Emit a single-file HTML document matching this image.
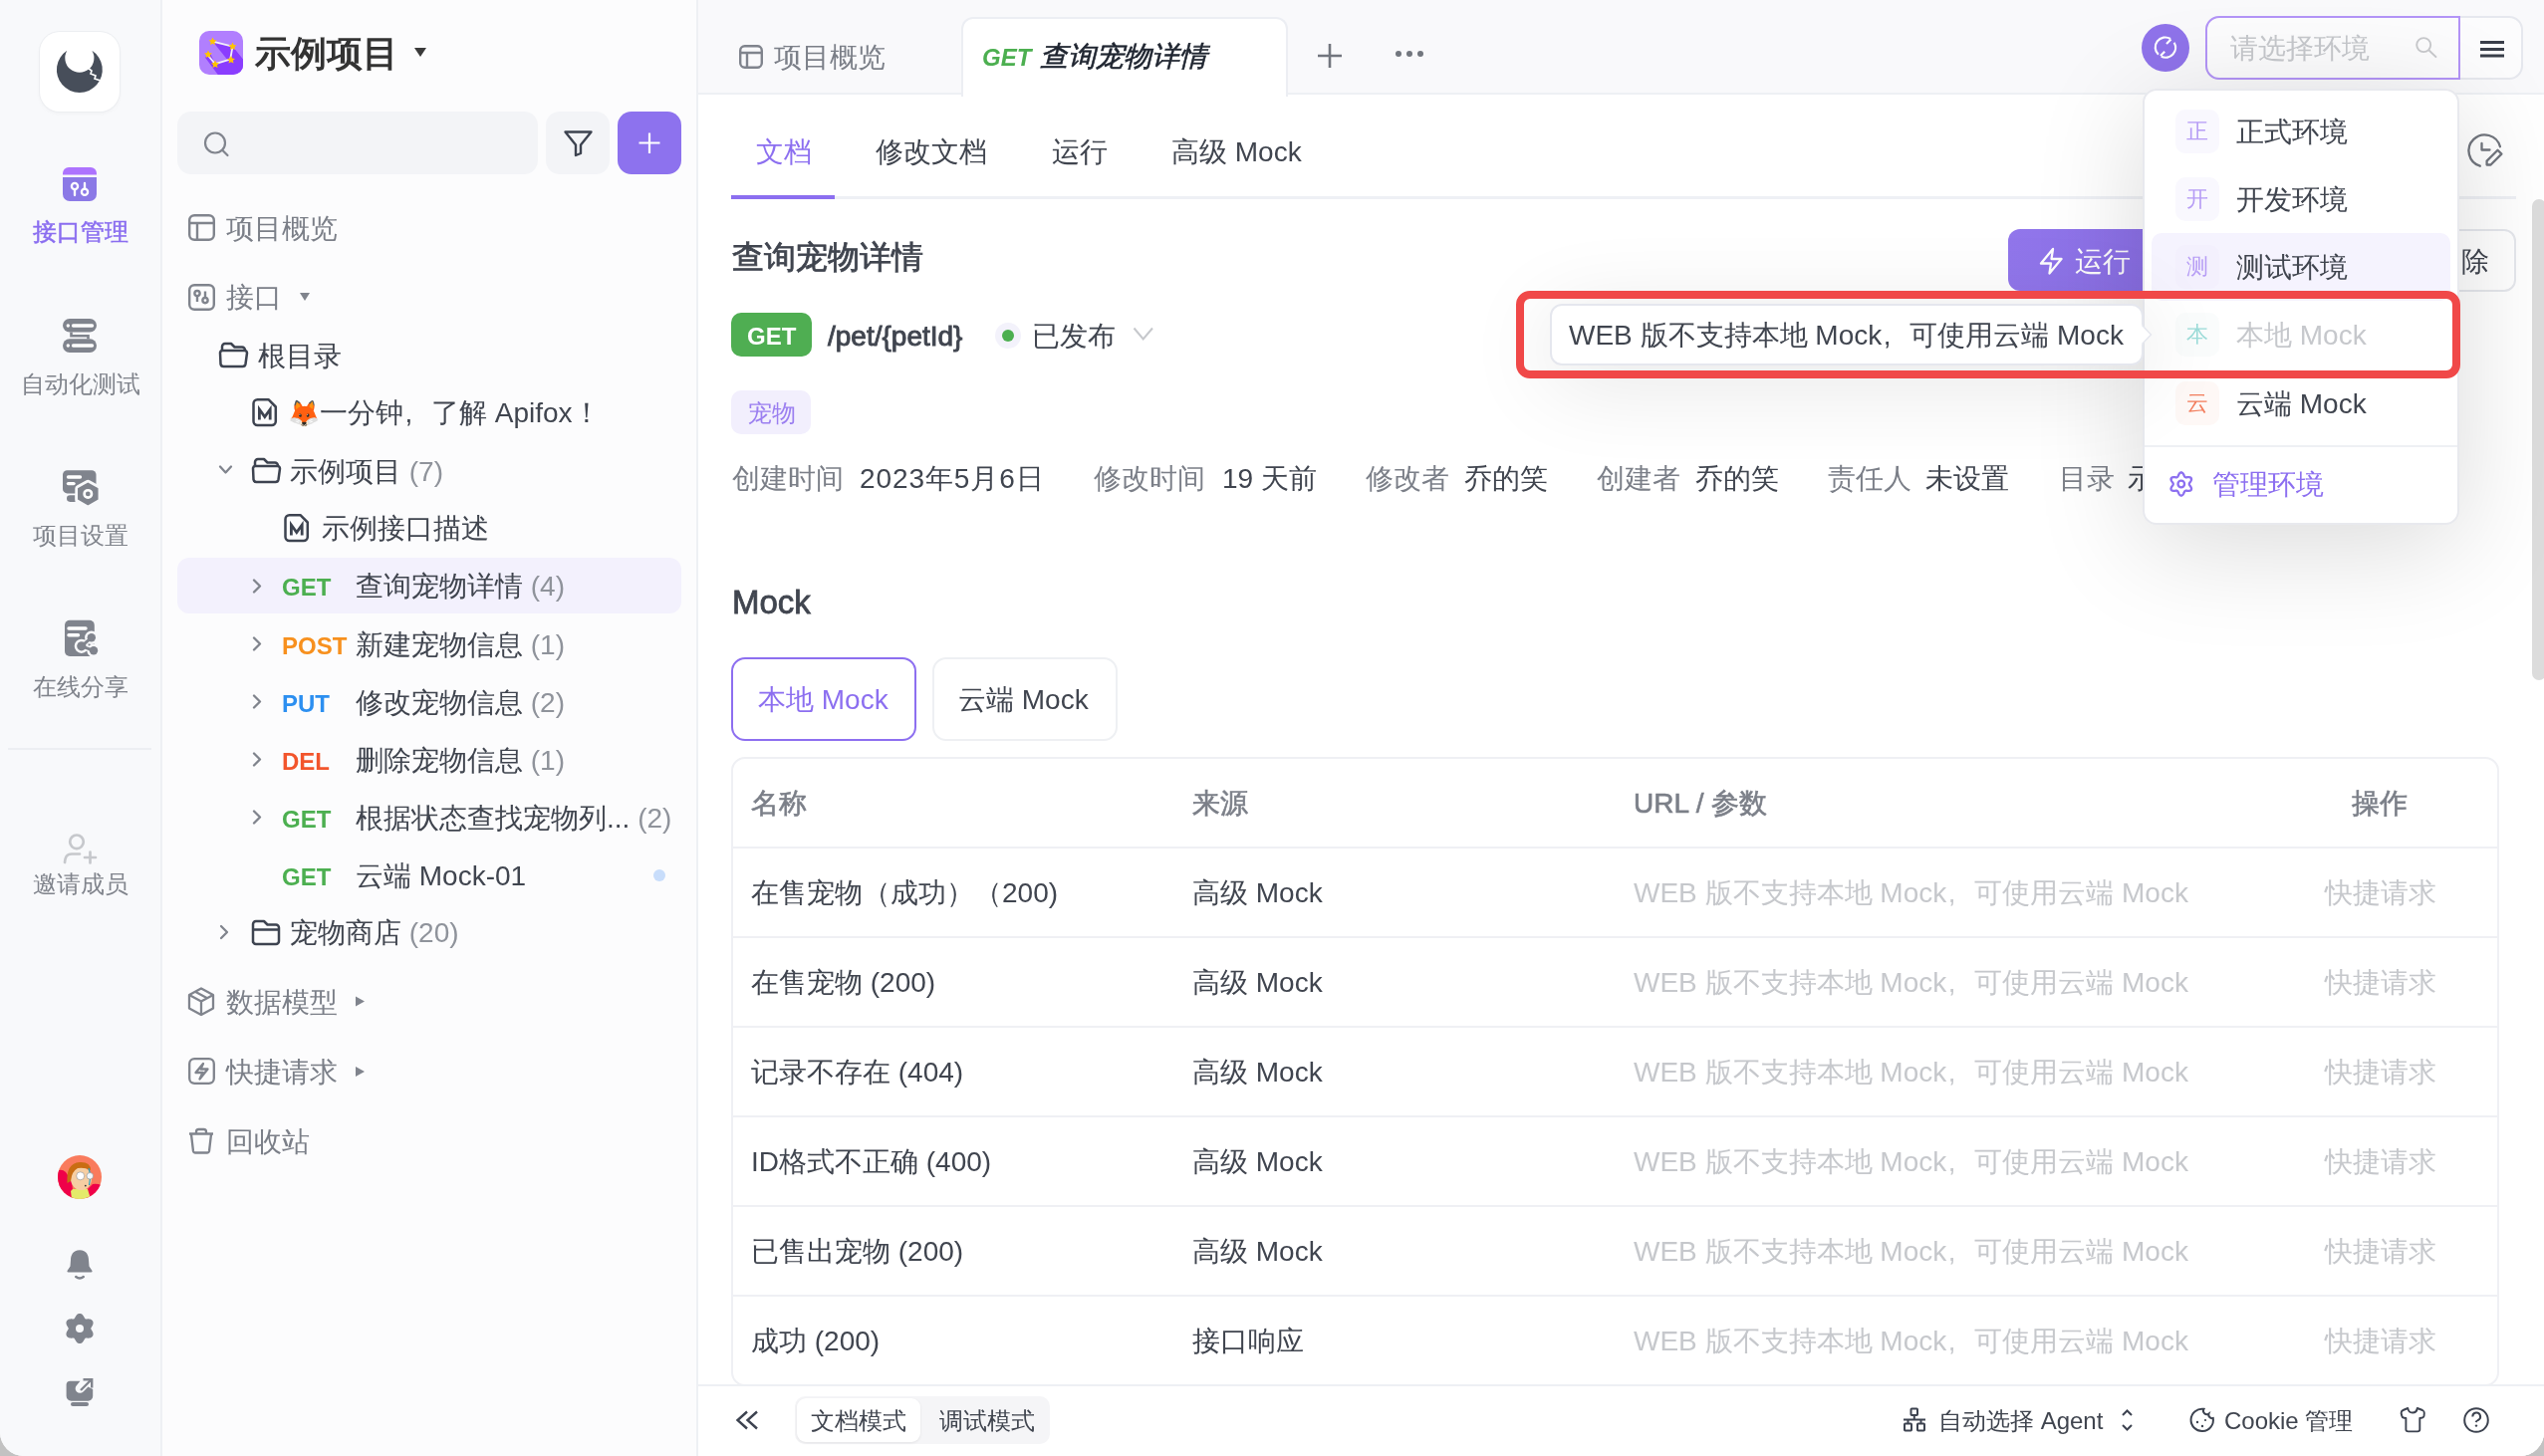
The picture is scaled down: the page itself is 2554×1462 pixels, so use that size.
<!DOCTYPE html>
<html><head><meta charset="utf-8">
<style>
*{box-sizing:border-box;margin:0;padding:0}
html,body{width:2554px;height:1462px;overflow:hidden;background:#c2c2c2}
body{font-family:"Liberation Sans",sans-serif;color:#40454f;position:relative}
.a{position:absolute;white-space:nowrap}
.cm{display:inline-block;width:1em;text-align:left;text-indent:0.05em}
.md{-webkit-text-stroke:0.6px currentColor}
.L{position:absolute;white-space:nowrap;line-height:40px;font-size:28px}
.win{position:absolute;left:0;top:0;width:2554px;height:1462px;background:#fff;border-radius:0 0 24px 24px;overflow:hidden;will-change:transform}
#nav{position:absolute;left:0;top:0;width:163px;height:1462px;background:#f8f9fb;border-right:2px solid #eef0f4}
#tree{position:absolute;left:163px;top:0;width:538px;height:1462px;background:#fcfcfd;border-right:2px solid #eef0f4}
#main{position:absolute;left:701px;top:0;width:1853px;height:1462px;background:#fff}
.nl{font-size:24px;line-height:30px;color:#80848c;left:0;width:161px;text-align:center}
.t28{font-size:28px;line-height:36px}
.gray{color:#7b7f88}
.cnt{color:#8f939b}
.m{font-weight:bold;font-size:24px;line-height:36px}
.get{color:#4caf50}.post{color:#f7901e}.put{color:#2c8ff0}.del{color:#f2552c}
</style></head><body>
<div class="win">
<!-- LEFT NAV -->
<div id="nav">
<div class="a" style="left:40px;top:32px;width:80px;height:80px;background:#fff;border-radius:20px;box-shadow:0 0 0 1px #eceef1,0 2px 4px rgba(0,0,0,0.04)"></div>
<svg class="a" style="left:0;top:0" width="161" height="1462" viewBox="0 0 161 1462">
 <!-- logo -->
 <path fill="#474e5a" fill-rule="evenodd" d="M67.35 50.8 A22.95 22.95 0 1 0 92.35 50.8 A14.55 14.55 0 1 1 67.35 50.8 Z"/>
 <path fill="none" stroke="#fff" stroke-width="1.6" d="M88 68 L92 71 L91 74 L96 76 L95 79 L101 81"/>
 <!-- api mgmt -->
 <path fill="#ad73fe" d="M69 168 H91 A6 6 0 0 1 97 174 V175.5 H63 V174 A6 6 0 0 1 69 168Z"/>
 <path fill="#8b79e6" d="M63 178 H97 V195 A7 7 0 0 1 90 202 H70 A7 7 0 0 1 63 195Z"/>
 <g fill="none" stroke="#fff" stroke-width="2.3" stroke-linecap="round">
  <circle cx="75" cy="187" r="3.1"/><path d="M75 190.1 V196"/>
  <circle cx="85" cy="192.8" r="3.1"/><path d="M85 189.7 V184"/>
 </g>
 <!-- auto test -->
 <rect x="63" y="320" width="34" height="13.6" rx="6.8" fill="#80848d"/>
 <rect x="63" y="340.3" width="34" height="13.6" rx="6.8" fill="#80848d"/>
 <g stroke="#fff" stroke-width="3.4" stroke-linecap="round"><path d="M73.5 327 H92.5"/><path d="M73.5 347 H92.5"/></g>
 <circle cx="68.3" cy="327" r="1.7" fill="#fff"/><circle cx="68.3" cy="347" r="1.7" fill="#fff"/>
 <path d="M71.5 333.6 V337.2 H88.5 V340.3" fill="none" stroke="#80848d" stroke-width="2.6"/>
 <!-- project settings -->
 <rect x="63" y="472.2" width="33.5" height="23.2" rx="4.5" fill="#80848d"/>
 <g stroke="#fff" stroke-width="3.4" stroke-linecap="round"><path d="M68.5 479 H80.5"/><path d="M68.5 485.6 H74"/></g>
 <path fill="#80848d" d="M70.3 497.3 H75.5 V503.9 H70.3 A3.3 3.3 0 0 1 70.3 497.3Z"/>
 <path fill="#80848d" stroke="#f8f9fb" stroke-width="7" stroke-linejoin="round" d="M88.3 485.3 L97.8 490.6 V501.2 L88.3 506.6 L78.8 501.2 V490.6Z"/>
 <path fill="#80848d" stroke="#80848d" stroke-width="1.5" stroke-linejoin="round" d="M88.3 485.3 L97.8 490.6 V501.2 L88.3 506.6 L78.8 501.2 V490.6Z"/>
 <circle cx="88.3" cy="495.9" r="3.7" fill="none" stroke="#fff" stroke-width="2.6"/>
 <!-- share -->
 <rect x="65" y="622.7" width="29.8" height="36.3" rx="5" fill="#80848d"/>
 <g stroke="#fff" stroke-width="3.4" stroke-linecap="round"><path d="M69 631 H86"/><path d="M69 637.8 H78.5"/></g>
 <g stroke="#f8f9fb" stroke-width="5" fill="#f8f9fb"><circle cx="91.8" cy="640.3" r="4.2"/><circle cx="81.8" cy="648.8" r="4.6"/><circle cx="94" cy="653.3" r="4.2"/><path d="M91.8 640.3 L81.8 648.8 L94 653.3" fill="none"/></g>
 <g fill="#80848d"><circle cx="91.8" cy="640.3" r="4.2"/><circle cx="81.8" cy="648.8" r="4.6"/><circle cx="94" cy="653.3" r="4.2"/></g>
 <path d="M91.8 640.3 L81.8 648.8 L94 653.3" fill="none" stroke="#80848d" stroke-width="3"/>
 <!-- separator -->
 <rect x="8" y="751" width="144" height="2" fill="#eceef2"/>
 <!-- invite -->
 <g fill="none" stroke="#c6c8cc" stroke-width="2.7" stroke-linecap="round">
  <circle cx="77" cy="845.3" r="6.8"/>
  <path d="M65 866 C65.5 861 66.5 857.5 72 857.5 H80"/>
  <path d="M90.5 855.5 V866.5 M85 861 H96"/>
 </g>
 <!-- avatar -->
 <defs><clipPath id="av"><circle cx="80" cy="1182" r="22"/></clipPath></defs>
 <g clip-path="url(#av)">
  <rect x="58" y="1160" width="44" height="44" fill="#f97b5d"/>
  <path d="M56 1176 Q62 1173 66 1177 L72 1186 L74 1204 H56Z" fill="#ef0049"/>
  <path d="M86 1196 L93 1189 Q98 1188 104 1191 V1204 H86Z" fill="#ef0049"/>
  <path d="M71 1196 L73 1194 H88 L91 1204 H72Z" fill="#e4ea6a"/>
  <ellipse cx="81.5" cy="1183.5" rx="10.5" ry="11.5" fill="#f6cea2"/>
  <path d="M67.5 1188 Q66 1168 80 1167 Q91 1166.5 91 1175 Q85 1172 78 1173 Q72 1176 71 1186Z" fill="#c96d12"/>
  <path d="M89 1173 Q91.5 1180 89.5 1190" fill="none" stroke="#22a6c8" stroke-width="1.2"/>
  <circle cx="80.7" cy="1180.8" r="4" fill="#fff" stroke="#8a8a8a" stroke-width="0.6"/>
  <circle cx="90.3" cy="1180.8" r="3.3" fill="#f2f7fb" stroke="#8a8a8a" stroke-width="0.6"/>
  <circle cx="85.8" cy="1190.6" r="0.9" fill="#333"/>
 </g>
 <!-- bell -->
 <path fill="#80848d" d="M80 1255.3 C73 1255.3 71 1261 71 1265 L70.5 1271.5 L67.5 1276 A1.3 1.3 0 0 0 68.6 1277.6 H91.4 A1.3 1.3 0 0 0 92.5 1276 L89.5 1271.5 L89 1265 C89 1261 87 1255.3 80 1255.3Z"/>
 <path d="M76.2 1282 Q80 1285 83.8 1282" fill="none" stroke="#80848d" stroke-width="2.4" stroke-linecap="round"/>
 <!-- gear -->
 <path fill="#80848d" d="M91.20 1334.00 L91.32 1334.40 L91.54 1334.81 L91.80 1335.24 L92.09 1335.70 L92.39 1336.18 L92.67 1336.69 L92.94 1337.23 L93.17 1337.78 L93.35 1338.34 L93.48 1338.91 L93.54 1339.47 L93.54 1340.03 L93.46 1340.56 L93.30 1341.07 L93.08 1341.55 L92.78 1341.98 L92.41 1342.37 L91.99 1342.71 L91.51 1342.99 L90.99 1343.22 L90.43 1343.39 L89.85 1343.52 L89.26 1343.59 L88.67 1343.63 L88.09 1343.64 L87.52 1343.62 L86.98 1343.60 L86.47 1343.59 L86.00 1343.61 L85.60 1343.70 L85.32 1344.01 L85.07 1344.40 L84.83 1344.84 L84.57 1345.32 L84.30 1345.82 L84.00 1346.32 L83.68 1346.82 L83.31 1347.29 L82.92 1347.73 L82.49 1348.13 L82.03 1348.46 L81.55 1348.74 L81.04 1348.94 L80.53 1349.06 L80.00 1349.10 L79.47 1349.06 L78.96 1348.94 L78.45 1348.74 L77.97 1348.46 L77.51 1348.13 L77.08 1347.73 L76.69 1347.29 L76.32 1346.82 L76.00 1346.32 L75.70 1345.82 L75.43 1345.32 L75.17 1344.84 L74.93 1344.40 L74.68 1344.01 L74.40 1343.70 L74.00 1343.61 L73.53 1343.59 L73.02 1343.60 L72.48 1343.62 L71.91 1343.64 L71.33 1343.63 L70.74 1343.59 L70.15 1343.52 L69.57 1343.39 L69.01 1343.22 L68.49 1342.99 L68.01 1342.71 L67.59 1342.37 L67.22 1341.98 L66.92 1341.55 L66.70 1341.07 L66.54 1340.56 L66.46 1340.03 L66.46 1339.47 L66.52 1338.91 L66.65 1338.34 L66.83 1337.78 L67.06 1337.23 L67.33 1336.69 L67.61 1336.18 L67.91 1335.70 L68.20 1335.24 L68.46 1334.81 L68.68 1334.40 L68.80 1334.00 L68.68 1333.60 L68.46 1333.19 L68.20 1332.76 L67.91 1332.30 L67.61 1331.82 L67.33 1331.31 L67.06 1330.77 L66.83 1330.22 L66.65 1329.66 L66.52 1329.09 L66.46 1328.53 L66.46 1327.97 L66.54 1327.44 L66.70 1326.93 L66.92 1326.45 L67.22 1326.02 L67.59 1325.63 L68.01 1325.29 L68.49 1325.01 L69.01 1324.78 L69.57 1324.61 L70.15 1324.48 L70.74 1324.41 L71.33 1324.37 L71.91 1324.36 L72.48 1324.38 L73.02 1324.40 L73.53 1324.41 L74.00 1324.39 L74.40 1324.30 L74.68 1323.99 L74.93 1323.60 L75.17 1323.16 L75.43 1322.68 L75.70 1322.18 L76.00 1321.68 L76.32 1321.18 L76.69 1320.71 L77.08 1320.27 L77.51 1319.87 L77.97 1319.54 L78.45 1319.26 L78.96 1319.06 L79.47 1318.94 L80.00 1318.90 L80.53 1318.94 L81.04 1319.06 L81.55 1319.26 L82.03 1319.54 L82.49 1319.87 L82.92 1320.27 L83.31 1320.71 L83.68 1321.18 L84.00 1321.68 L84.30 1322.18 L84.57 1322.68 L84.83 1323.16 L85.07 1323.60 L85.32 1323.99 L85.60 1324.30 L86.00 1324.39 L86.47 1324.41 L86.98 1324.40 L87.52 1324.38 L88.09 1324.36 L88.67 1324.37 L89.26 1324.41 L89.85 1324.48 L90.43 1324.61 L90.99 1324.78 L91.51 1325.01 L91.99 1325.29 L92.41 1325.63 L92.78 1326.02 L93.08 1326.45 L93.30 1326.93 L93.46 1327.44 L93.54 1327.97 L93.54 1328.53 L93.48 1329.09 L93.35 1329.66 L93.17 1330.22 L92.94 1330.77 L92.67 1331.31 L92.39 1331.82 L92.09 1332.30 L91.80 1332.76 L91.54 1333.19 L91.32 1333.60Z"/>
 <circle cx="80" cy="1334" r="4" fill="#f8f9fb"/>
 <!-- screen share -->
 <path fill="#80848d" d="M70.5 1386.7 H80.5 L77 1391 A4.5 4.5 0 0 0 83.5 1397.5 L88.5 1392.5 L93.2 1395 V1402 A4.7 4.7 0 0 1 88.5 1406.7 H71.5 A4.9 4.9 0 0 1 66.6 1401.8 V1390.6 A3.9 3.9 0 0 1 70.5 1386.7Z"/>
 <rect x="71" y="1408" width="18" height="4" rx="2" fill="#80848d"/>
 <path d="M81 1396 L91 1386 M83.5 1385.2 H92.2 V1393.5" fill="none" stroke="#80848d" stroke-width="2.4"/>
</svg>
<div class="a nl" style="top:218px;color:#8a6ef0;-webkit-text-stroke:0.5px #8a6ef0">接口管理</div>
<div class="a nl" style="top:370.5px">自动化测试</div>
<div class="a nl" style="top:522.5px">项目设置</div>
<div class="a nl" style="top:675px">在线分享</div>
<div class="a nl" style="top:873px">邀请成员</div>
</div>
<!-- TREE -->
<div id="tree"></div>
<div class="a" style="left:178px;top:560px;width:506px;height:56px;border-radius:12px;background:#f3f1fd"></div>
<svg class="a" style="left:0;top:0" width="701" height="1462" viewBox="0 0 701 1462">
 <defs><clipPath id="pc"><rect x="200" y="31" width="44" height="44" rx="10"/></clipPath></defs>
 <g clip-path="url(#pc)">
  <rect x="200" y="31" width="44" height="44" fill="#b17ffe"/>
  <path d="M213.5 41.6 L233.5 46.7 L265.5 86.7 L245.5 81.6Z" fill="#8a3dfe"/><path d="M233.5 46.7 L231.2 59.5 L263.2 99.5 L265.5 86.7Z" fill="#8a3dfe"/><path d="M231.2 59.5 L216 64.2 L248 104.2 L263.2 99.5Z" fill="#8a3dfe"/><path d="M216 64.2 L208.2 54.8 L240.2 94.8 L248 104.2Z" fill="#8a3dfe"/>
 <path d="M205.8 57.5 L210.8 52.8 L216 64.2 L232 80 L222.5 80Z" fill="#8a3dfe"/>
 </g>
 <path d="M213.5 41.6 L233.5 46.7 L231.2 59.5 L216 64.2 L208.2 54.8" fill="none" stroke="#f2f0fb" stroke-width="1.8"/>
 <g fill="#ffc400">
  <path d="M213.5 37.5 l1.2 2.6 2.8 .3 -2.1 1.9 .6 2.8 -2.5 -1.4 -2.5 1.4 .6 -2.8 -2.1 -1.9 2.8 -.3z"/>
  <path d="M233.5 42.5 l1.2 2.6 2.8 .3 -2.1 1.9 .6 2.8 -2.5 -1.4 -2.5 1.4 .6 -2.8 -2.1 -1.9 2.8 -.3z"/>
  <path d="M209 50.5 l1.2 2.6 2.8 .3 -2.1 1.9 .6 2.8 -2.5 -1.4 -2.5 1.4 .6 -2.8 -2.1 -1.9 2.8 -.3z"/>
  <path d="M216 60.5 l1.2 2.6 2.8 .3 -2.1 1.9 .6 2.8 -2.5 -1.4 -2.5 1.4 .6 -2.8 -2.1 -1.9 2.8 -.3z"/>
  <path d="M232 56 l1.2 2.6 2.8 .3 -2.1 1.9 .6 2.8 -2.5 -1.4 -2.5 1.4 .6 -2.8 -2.1 -1.9 2.8 -.3z"/>
 </g>
 <path d="M416 48 H428 L422 57Z" fill="#3a3a3a"/>
 <rect x="178" y="112" width="362" height="63" rx="14" fill="#f3f4f7"/>
 <rect x="548" y="112" width="64" height="63" rx="14" fill="#f3f4f7"/>
 <rect x="620" y="112" width="64" height="63" rx="14" fill="#8d72ee"/>
 <g fill="none" stroke="#80848d" stroke-width="2.2" stroke-linecap="round"><circle cx="216" cy="143.5" r="10"/><path d="M223.5 151 L228.5 156"/></g>
 <path d="M567.5 132.5 H593.5 L583 145.5 V154 L578 156 V145.5Z" fill="none" stroke="#3d4350" stroke-width="2.4" stroke-linejoin="round"/>
 <path d="M652 133.5 V154 M641.5 143.5 H662.5" stroke="#fff" stroke-width="2.2"/>
 <!-- overview icon -->
 <g fill="none" stroke="#80848d" stroke-width="2.4">
  <rect x="190.2" y="216.2" width="24.6" height="24.6" rx="5"/>
  <path d="M190.2 224 H214.8 M198 224 V240.8"/>
  <rect x="190.2" y="286.2" width="24.6" height="24.6" rx="5"/>
  <circle cx="198" cy="294.6" r="2.6"/><path d="M198 297.2 V303"/>
  <circle cx="206" cy="301.6" r="2.6"/><path d="M206 299 V292.5"/>
 </g>
 <path d="M301 294 H311 L306 302Z" fill="#80848d"/>
 <!-- folders -->
 <g fill="none" stroke="#3d4350" stroke-width="2.5" stroke-linejoin="round">
  <path d="M223 352 V348 A3 3 0 0 1 226 345 H232 L235.5 348.5 H243 A3 3 0 0 1 246 351.5 V353"/>
  <path d="M221 354 A2.5 2.5 0 0 1 223.5 352 H245.5 A2.5 2.5 0 0 1 248 354.5 L246.5 365.5 A3 3 0 0 1 243.5 368 H224.5 A3 3 0 0 1 221.5 365.5Z"/>
 </g>
 <g fill="none" stroke="#3d4350" stroke-width="2.5" stroke-linejoin="round" transform="translate(33 116)">
  <path d="M223 352 V348 A3 3 0 0 1 226 345 H232 L235.5 348.5 H243 A3 3 0 0 1 246 351.5 V353"/>
  <path d="M221 354 A2.5 2.5 0 0 1 223.5 352 H245.5 A2.5 2.5 0 0 1 248 354.5 L246.5 365.5 A3 3 0 0 1 243.5 368 H224.5 A3 3 0 0 1 221.5 365.5Z"/>
 </g>
 <g fill="none" stroke="#3d4350" stroke-width="2.5" stroke-linejoin="round" transform="translate(33 580)">
  <path d="M221 366 V348 A3 3 0 0 1 224 345 H232 L235.5 348.5 H244 A3 3 0 0 1 247 351.5 V365 A3 3 0 0 1 244 368 H224 A3 3 0 0 1 221 365Z"/>
  <path d="M221 353.5 H247"/>
 </g>
 <!-- M docs -->
 <g fill="none" stroke="#3d4350" stroke-width="2.5" stroke-linejoin="round">
  <path d="M258.5 401.2 H269.5 L276.8 408.5 V423 A4 4 0 0 1 272.8 427 H258.5 A4 4 0 0 1 254.5 423 V405.2 A4 4 0 0 1 258.5 401.2Z"/>
  <path d="M290.5 517.2 H301.5 L308.8 524.5 V539 A4 4 0 0 1 304.8 543 H290.5 A4 4 0 0 1 286.5 539 V521.2 A4 4 0 0 1 290.5 517.2Z"/>
 </g>
 <g fill="none" stroke="#3d4350" stroke-width="2.8" stroke-linejoin="miter">
  <path d="M260.4 421.5 V411 L265.8 418.5 L271.2 411 V421.5"/>
  <path d="M292.4 537.5 V527 L297.8 534.5 L303.2 527 V537.5"/>
 </g>
 <!-- chevrons -->
 <g fill="none" stroke="#80848d" stroke-width="2.3" stroke-linecap="round" stroke-linejoin="round">
  <path d="M221 468.5 L226.5 474.5 L232 468.5"/>
  <path d="M255 582.5 L261 588.5 L255 594.5"/>
  <path d="M255 640.5 L261 646.5 L255 652.5"/>
  <path d="M255 698.5 L261 704.5 L255 710.5"/>
  <path d="M255 756.5 L261 762.5 L255 768.5"/>
  <path d="M255 814.5 L261 820.5 L255 826.5"/>
  <path d="M222 930 L228 936 L222 942"/>
 </g>
 <circle cx="662" cy="879" r="6" fill="#c8ddfb"/>
 <!-- data model cube -->
 <g fill="none" stroke="#80848d" stroke-width="2.3" stroke-linejoin="round">
  <path d="M202 992.5 L214 999 V1012.5 L202 1019 L190 1012.5 V999Z"/>
  <path d="M190 999 L202 1005.5 L214 999 M202 1005.5 V1019 M196 995.8 L208 1002.3"/>
  <rect x="190.2" y="1063.2" width="24.6" height="24.6" rx="5"/>
  <path d="M204 1068 L196.5 1077 H203.5 L200.5 1083.5 L208.5 1073.5 H201.5Z"/>
  <path d="M190 1138.5 H214 M197 1138.5 V1136.5 A2.5 2.5 0 0 1 199.5 1134 H204.5 A2.5 2.5 0 0 1 207 1136.5 V1138.5 M192 1139 L194 1156 A2 2 0 0 0 196 1157.5 H208 A2 2 0 0 0 210 1156 L212 1139"/>
 </g>
 <path d="M357 1000.5 L366 1005.5 L357 1010.5Z M357 1071 L366 1076 L357 1081Z" fill="#80848d"/>
</svg>
<div class="L" style="left:256px;top:32px;font-size:36px;line-height:44px;color:#333;font-weight:bold">示例项目</div>
<div class="L gray" style="left:227px;top:209.5px">项目概览</div>
<div class="L gray" style="left:227px;top:279px">接口</div>
<div class="L" style="left:259px;top:337.5px">根目录</div>
<div class="L" style="left:289px;top:395px"><span style="font-size:26px">🦊</span>一分钟<span class="cm">,</span>了解 Apifox！</div>
<div class="L" style="left:291px;top:453.5px">示例项目 <span class="cnt">(7)</span></div>
<div class="L" style="left:323px;top:511px">示例接口描述</div>
<div class="L" style="left:283px;top:569px"><span class="m get">GET</span></div>
<div class="L" style="left:357px;top:569px">查询宠物详情 <span class="cnt">(4)</span></div>
<div class="L" style="left:283px;top:627.5px"><span class="m post">POST</span></div>
<div class="L" style="left:357px;top:627.5px">新建宠物信息 <span class="cnt">(1)</span></div>
<div class="L" style="left:283px;top:685.5px"><span class="m put">PUT</span></div>
<div class="L" style="left:357px;top:685.5px">修改宠物信息 <span class="cnt">(2)</span></div>
<div class="L" style="left:283px;top:743.5px"><span class="m del">DEL</span></div>
<div class="L" style="left:357px;top:743.5px">删除宠物信息 <span class="cnt">(1)</span></div>
<div class="L" style="left:283px;top:801.5px"><span class="m get">GET</span></div>
<div class="L" style="left:357px;top:801.5px">根据状态查找宠物列... <span class="cnt">(2)</span></div>
<div class="L" style="left:283px;top:860px"><span class="m get">GET</span></div>
<div class="L" style="left:357px;top:860px">云端 Mock-01</div>
<div class="L" style="left:291px;top:917px">宠物商店 <span class="cnt">(20)</span></div>
<div class="L gray" style="left:227px;top:986.5px">数据模型</div>
<div class="L gray" style="left:227px;top:1057px">快捷请求</div>
<div class="L gray" style="left:227px;top:1127px">回收站</div>

<!-- MAIN -->
<div id="main"></div>
<!-- tab bar -->
<div class="a" style="left:701px;top:0;width:1853px;height:95px;background:#f9f9fb;border-bottom:2px solid #eef0f4"></div>
<div class="a" style="left:965px;top:17px;width:328px;height:80px;background:#fff;border:2px solid #eceef3;border-bottom:none;border-radius:12px 12px 0 0"></div>
<svg class="a" style="left:701px;top:0" width="1853" height="1462" viewBox="701 0 1853 1462">
 <g fill="none" stroke="#80848d" stroke-width="2.4">
  <rect x="743.2" y="46.2" width="21.6" height="21.6" rx="4.5"/>
  <path d="M743.2 53 H764.8 M750 53 V67.8"/>
 </g>
 <path d="M1335 44 V68 M1323 56 H1347" stroke="#72767e" stroke-width="2.6"/>
 <g fill="#72767e"><circle cx="1404" cy="54" r="3"/><circle cx="1415" cy="54" r="3"/><circle cx="1426" cy="54" r="3"/></g>
 <circle cx="2174" cy="48" r="24" fill="#8f73ea"/>
 <g fill="none" stroke="#fff" stroke-width="2.2">
  <path d="M2166.9 54.8 A10 10 0 0 1 2179 39"/>
  <path d="M2182.7 42.7 A10 10 0 0 1 2169.8 56.8"/>
  <path d="M2179.5 39.5 L2175 44 M2169 56 L2173.2 51.8"/>
 </g>
</svg>
<div class="L gray" style="left:777px;top:38px">项目概览</div>
<div class="L" style="left:986px;top:36.5px"><span class="m get" style="font-style:italic">GET</span></div>
<div class="L" style="left:1044px;top:36.5px;font-style:italic;color:#1f2530;-webkit-text-stroke:0.6px #1f2530">查询宠物详情</div>
<!-- env select -->
<div class="a" style="left:2214px;top:16px;width:319px;height:64px;border:2px solid #e6e8ee;border-radius:14px;background:#fcfcfd"></div>
<div class="a" style="left:2214px;top:16px;width:256px;height:64px;border:2px solid #b394f7;border-radius:14px 0 0 14px;background:#fcfcfd"></div>
<div class="L" style="left:2239px;top:29px;color:#c6c8cc">请选择环境</div>
<svg class="a" style="left:2400px;top:0" width="154" height="95" viewBox="2400 0 154 95">
 <g fill="none" stroke="#c8c9cc" stroke-width="1.9"><circle cx="2433.2" cy="45.1" r="7"/><path d="M2438.3 50.2 L2446 57.6"/></g>
 <path d="M2490 42.5 H2514 M2490 49.5 H2514 M2490 56 H2514" stroke="#3a3f4a" stroke-width="2.8"/>
</svg>
<!-- sub tabs -->
<div class="a" style="left:734px;top:197px;width:1792px;height:3px;background:#eef0f5"></div>
<div class="a" style="left:734px;top:196px;width:104px;height:4px;background:#8c6ff0"></div>
<div class="L" style="left:759px;top:132.5px;color:#8c6ff0">文档</div>
<div class="L" style="left:879px;top:132.5px">修改文档</div>
<div class="L" style="left:1056px;top:132.5px">运行</div>
<div class="L" style="left:1176px;top:132.5px">高级 Mock</div>
<svg class="a" style="left:2470px;top:125px" width="50" height="50" viewBox="2470 125 50 50">
 <g fill="none" stroke="#72767e" stroke-width="2.3" stroke-linecap="round" stroke-linejoin="round">
  <path d="M2489.8 166.7 A16 16 0 1 1 2509.95 147.26"/>
  <path d="M2491.5 144 V150.5 H2499.5"/>
  <path d="M2496.6 161.6 L2507.5 150.7 L2511.4 154.6 L2500.5 165.5 H2496.6Z"/>
 </g>
</svg>
<!-- title row -->
<div class="L md" style="left:735px;top:238px;font-size:32px;color:#40454f;-webkit-text-stroke:0.8px #40454f">查询宠物详情</div>
<div class="a" style="left:2016px;top:230px;width:200px;height:62px;border-radius:12px;background:linear-gradient(90deg,#9176eb,#8a6ee6)"></div>
<svg class="a" style="left:2040px;top:240px" width="40" height="40" viewBox="2040 240 40 40">
 <path d="M2061 250 L2049 264.5 H2059 L2057.5 274.5 L2069.5 260 H2059.5Z" fill="none" stroke="#fff" stroke-width="2.3" stroke-linejoin="round"/>
</svg>
<div class="L" style="left:2083px;top:243px;color:#fff">运行</div>
<div class="a" style="left:2300px;top:230px;width:226px;height:63px;border:2px solid #e5e7ec;border-radius:12px;background:#fff"></div>
<div class="L" style="left:2471px;top:243px">除</div>
<!-- method row -->
<div class="a" style="left:734px;top:314px;width:81px;height:44px;border-radius:10px;background:#4fae52"></div>
<div class="L" style="left:750px;top:317px"><span class="m" style="color:#fff">GET</span></div>
<div class="L md" style="left:831px;top:318px;font-size:28px;color:#40454f;-webkit-text-stroke:0.9px #40454f">/pet/{petId}</div>
<div class="a" style="left:999px;top:324px;width:26px;height:26px;border-radius:50%;background:#f3f2fb"></div>
<div class="a" style="left:1006px;top:331px;width:12px;height:12px;border-radius:50%;background:#4caf50"></div>
<div class="L" style="left:1036px;top:318px">已发布</div>
<svg class="a" style="left:1135px;top:325px" width="26" height="20" viewBox="1135 325 26 20"><path d="M1138.5 329.5 L1147.7 340.5 L1157 329.5" fill="none" stroke="#c6c8cc" stroke-width="2"/></svg>
<div class="a" style="left:734px;top:392px;width:80px;height:44px;border-radius:10px;background:#f2effd"></div>
<div class="L" style="left:751px;top:395px;font-size:24px;color:#9b7ff0">宠物</div>
<!-- meta -->
<div class="L gray" style="left:735px;top:461px">创建时间</div>
<div class="L" style="left:863px;top:461px;letter-spacing:0.9px">2023年5月6日</div>
<div class="L gray" style="left:1098px;top:461px">修改时间</div>
<div class="L" style="left:1227px;top:461px">19 天前</div>
<div class="L gray" style="left:1371px;top:461px">修改者</div>
<div class="L" style="left:1470px;top:461px">乔的笑</div>
<div class="L gray" style="left:1603px;top:461px">创建者</div>
<div class="L" style="left:1702px;top:461px">乔的笑</div>
<div class="L gray" style="left:1835px;top:461px">责任人</div>
<div class="L" style="left:1933px;top:461px">未设置</div>
<div class="L gray" style="left:2067px;top:461px">目录</div>
<div class="L" style="left:2136px;top:461px">示例项目</div>
<!-- mock -->
<div class="L md" style="left:735px;top:585px;font-size:33px;color:#40454f;-webkit-text-stroke:0.8px #40454f">Mock</div>
<div class="a" style="left:734px;top:660px;width:186px;height:84px;border:2px solid #8d6ff0;border-radius:14px"></div>
<div class="L" style="left:761px;top:683px;color:#8c6ff0">本地 Mock</div>
<div class="a" style="left:936px;top:660px;width:186px;height:84px;border:2px solid #eef0f3;border-radius:14px"></div>
<div class="L" style="left:962px;top:683px">云端 Mock</div>
<!-- table -->
<div class="a" style="left:734px;top:760px;width:1775px;height:632px;border:2px solid #eff0f4;border-radius:14px"></div>
<div class="a" style="left:736px;top:850px;width:1771px;height:2px;background:#eff0f4"></div>
<div class="a" style="left:736px;top:940px;width:1771px;height:2px;background:#eff0f4"></div>
<div class="a" style="left:736px;top:1030px;width:1771px;height:2px;background:#eff0f4"></div>
<div class="a" style="left:736px;top:1120px;width:1771px;height:2px;background:#eff0f4"></div>
<div class="a" style="left:736px;top:1210px;width:1771px;height:2px;background:#eff0f4"></div>
<div class="a" style="left:736px;top:1300px;width:1771px;height:2px;background:#eff0f4"></div>
<div class="L" style="left:754px;top:787px;color:#7b7f88;-webkit-text-stroke:0.6px #7b7f88">名称</div>
<div class="L" style="left:1197px;top:787px;color:#7b7f88;-webkit-text-stroke:0.6px #7b7f88">来源</div>
<div class="L" style="left:1640px;top:787px;color:#7b7f88;-webkit-text-stroke:0.6px #7b7f88">URL / 参数</div>
<div class="L" style="left:2361px;top:787px;color:#7b7f88;-webkit-text-stroke:0.6px #7b7f88">操作</div>
<div class="L" style="left:754px;top:877px">在售宠物（成功）（200)</div>
<div class="L" style="left:1197px;top:877px">高级 Mock</div>
<div class="L" style="left:1640px;top:877px;color:#c6c8cc">WEB 版不支持本地 Mock<span class="cm">,</span>可使用云端 Mock</div>
<div class="L" style="left:2334px;top:877px;color:#c6c8cc">快捷请求</div>
<div class="L" style="left:754px;top:967px">在售宠物 (200)</div>
<div class="L" style="left:1197px;top:967px">高级 Mock</div>
<div class="L" style="left:1640px;top:967px;color:#c6c8cc">WEB 版不支持本地 Mock<span class="cm">,</span>可使用云端 Mock</div>
<div class="L" style="left:2334px;top:967px;color:#c6c8cc">快捷请求</div>
<div class="L" style="left:754px;top:1057px">记录不存在 (404)</div>
<div class="L" style="left:1197px;top:1057px">高级 Mock</div>
<div class="L" style="left:1640px;top:1057px;color:#c6c8cc">WEB 版不支持本地 Mock<span class="cm">,</span>可使用云端 Mock</div>
<div class="L" style="left:2334px;top:1057px;color:#c6c8cc">快捷请求</div>
<div class="L" style="left:754px;top:1147px">ID格式不正确 (400)</div>
<div class="L" style="left:1197px;top:1147px">高级 Mock</div>
<div class="L" style="left:1640px;top:1147px;color:#c6c8cc">WEB 版不支持本地 Mock<span class="cm">,</span>可使用云端 Mock</div>
<div class="L" style="left:2334px;top:1147px;color:#c6c8cc">快捷请求</div>
<div class="L" style="left:754px;top:1237px">已售出宠物 (200)</div>
<div class="L" style="left:1197px;top:1237px">高级 Mock</div>
<div class="L" style="left:1640px;top:1237px;color:#c6c8cc">WEB 版不支持本地 Mock<span class="cm">,</span>可使用云端 Mock</div>
<div class="L" style="left:2334px;top:1237px;color:#c6c8cc">快捷请求</div>
<div class="L" style="left:754px;top:1327px">成功 (200)</div>
<div class="L" style="left:1197px;top:1327px">接口响应</div>
<div class="L" style="left:1640px;top:1327px;color:#c6c8cc">WEB 版不支持本地 Mock<span class="cm">,</span>可使用云端 Mock</div>
<div class="L" style="left:2334px;top:1327px;color:#c6c8cc">快捷请求</div>
<div class="a" style="left:701px;top:1390px;width:1853px;height:72px;background:#fff;border-top:2px solid #eef0f4"></div>
<svg class="a" style="left:701px;top:1390px" width="1853" height="72" viewBox="701 1390 1853 72">
 <path d="M750 1417.5 L740.5 1426 L750 1434.5 M760 1417.5 L750.5 1426 L760 1434.5" fill="none" stroke="#3d4350" stroke-width="2.4"/>
</svg>
<div class="a" style="left:798px;top:1402px;width:256px;height:48px;border-radius:10px;background:#f5f5f7"></div>
<div class="a" style="left:800px;top:1404px;width:124px;height:44px;border-radius:9px;background:#fff;box-shadow:0 1px 3px rgba(0,0,0,0.08)"></div>
<div class="L" style="left:814px;top:1407px;font-size:24px">文档模式</div>
<div class="L" style="left:943px;top:1407px;font-size:24px">调试模式</div>
<svg class="a" style="left:1900px;top:1400px" width="654" height="62" viewBox="1900 1400 654 62">
 <g fill="none" stroke="#3d4350" stroke-width="2">
  <rect x="1918.5" y="1414.5" width="6.5" height="6.5" rx="0.8"/>
  <rect x="1912" y="1429.5" width="7" height="7" rx="0.8"/>
  <rect x="1925" y="1429.5" width="7" height="7" rx="0.8"/>
  <path d="M1921.8 1421 V1425.5 M1911 1425.5 H1933 M1915.5 1425.5 V1429.5 M1928.5 1425.5 V1429.5"/>
  <path d="M2131 1421 L2135.5 1416.5 L2140 1421 M2131 1431 L2135.5 1435.5 L2140 1431"/>
  <path d="M2212.5 1414.8 A11.2 11.2 0 1 0 2221.8 1424 A3.5 3.5 0 0 1 2217.5 1419.5 A3.5 3.5 0 0 1 2212.5 1414.8Z"/>
  <path d="M2417.3 1414 C2418 1420 2426 1420 2426.8 1414 L2432 1416 Q2434 1417 2433.8 1419 L2433.5 1422 Q2433 1423.5 2431 1423.7 L2429.3 1424 V1435.5 Q2429.2 1437.3 2427 1437.4 H2417.8 Q2415.5 1437.3 2415.4 1435.5 V1424 L2413.5 1423.7 Q2411.5 1423.5 2411.2 1421.5 L2410.6 1419 Q2410.6 1416.8 2412.5 1416Z" stroke-width="1.9" stroke-linejoin="round"/>
  <circle cx="2486" cy="1426" r="11.8" stroke-width="2"/>
  <path d="M2482.3 1422.4 A3.9 3.9 0 1 1 2487.8 1426 Q2486 1427 2485.5 1428" stroke-width="2"/>
 </g>
 <g fill="#3d4350"><circle cx="2486" cy="1431.6" r="1.2"/><circle cx="2206" cy="1428" r="1.2"/><circle cx="2211" cy="1432" r="1.2"/><circle cx="2214" cy="1426" r="1.1"/></g>
</svg>
<div class="L" style="left:1946px;top:1407px;font-size:24px">自动选择 Agent</div>
<div class="L" style="left:2233px;top:1407px;font-size:24px">Cookie 管理</div>
<!-- scrollbar -->
<div class="a" style="left:2542px;top:200px;width:14px;height:483px;border-radius:7px;background:#dcdcdc"></div>
<!-- dropdown + tooltip -->
<div class="a" style="left:2151px;top:89px;width:318px;height:438px;border-radius:14px;background:#fff;border:2px solid #e8e9ee;box-shadow:0 20px 110px rgba(0,0,0,0.15)"></div>
<div class="a" style="left:2160px;top:234px;width:300px;height:68px;border-radius:10px;background:#f5f3fe"></div>
<div class="a" style="left:2153px;top:447px;width:314px;height:2px;background:#eef0f4"></div>
<div class="a" style="left:2184px;top:110px;width:44px;height:44px;border-radius:10px;background:#f9f8fe;color:#b69cf5;font-size:22px;line-height:44px;text-align:center">正</div>
<div class="L" style="left:2245px;top:113px;color:#40454f">正式环境</div>
<div class="a" style="left:2184px;top:178px;width:44px;height:44px;border-radius:10px;background:#f9f8fe;color:#b69cf5;font-size:22px;line-height:44px;text-align:center">开</div>
<div class="L" style="left:2245px;top:181px;color:#40454f">开发环境</div>
<div class="a" style="left:2184px;top:246px;width:44px;height:44px;border-radius:10px;background:#f3f0fd;color:#b69cf5;font-size:22px;line-height:44px;text-align:center">测</div>
<div class="L" style="left:2245px;top:249px;color:#40454f">测试环境</div>
<div class="a" style="left:2184px;top:314px;width:44px;height:44px;border-radius:10px;background:#fafcfc;color:#9ddcd9;font-size:22px;line-height:44px;text-align:center">本</div>
<div class="L" style="left:2245px;top:317px;color:#c6c8cc">本地 Mock</div>
<div class="a" style="left:2184px;top:383px;width:44px;height:44px;border-radius:10px;background:#fef8f6;color:#f27e5e;font-size:22px;line-height:44px;text-align:center">云</div>
<div class="L" style="left:2245px;top:386px;color:#40454f">云端 Mock</div>
<svg class="a" style="left:2170px;top:465px" width="40" height="40" viewBox="2170 465 40 40">
 <path d="M2197.80 486.00 L2197.82 486.28 L2197.89 486.57 L2198.03 486.86 L2198.21 487.18 L2198.45 487.53 L2198.72 487.90 L2199.01 488.30 L2199.29 488.72 L2199.56 489.17 L2199.78 489.63 L2199.95 490.10 L2200.05 490.57 L2200.07 491.01 L2200.00 491.43 L2199.85 491.80 L2199.60 492.12 L2199.28 492.39 L2198.88 492.60 L2198.43 492.74 L2197.94 492.83 L2197.42 492.86 L2196.90 492.86 L2196.39 492.82 L2195.90 492.78 L2195.45 492.73 L2195.03 492.70 L2194.66 492.69 L2194.34 492.73 L2194.05 492.81 L2193.80 492.93 L2193.57 493.09 L2193.36 493.29 L2193.16 493.56 L2192.98 493.88 L2192.80 494.25 L2192.62 494.67 L2192.42 495.12 L2192.19 495.58 L2191.93 496.03 L2191.64 496.46 L2191.32 496.84 L2190.97 497.16 L2190.60 497.40 L2190.20 497.55 L2189.80 497.60 L2189.40 497.55 L2189.00 497.40 L2188.63 497.16 L2188.28 496.84 L2187.96 496.46 L2187.67 496.03 L2187.41 495.58 L2187.18 495.12 L2186.98 494.67 L2186.80 494.25 L2186.62 493.88 L2186.44 493.56 L2186.24 493.29 L2186.03 493.09 L2185.80 492.93 L2185.55 492.81 L2185.26 492.73 L2184.94 492.69 L2184.57 492.70 L2184.15 492.73 L2183.70 492.78 L2183.21 492.82 L2182.70 492.86 L2182.18 492.86 L2181.66 492.83 L2181.17 492.74 L2180.72 492.60 L2180.32 492.39 L2180.00 492.12 L2179.75 491.80 L2179.60 491.43 L2179.53 491.01 L2179.55 490.57 L2179.65 490.10 L2179.82 489.63 L2180.04 489.17 L2180.31 488.72 L2180.59 488.30 L2180.88 487.90 L2181.15 487.53 L2181.39 487.18 L2181.57 486.86 L2181.71 486.57 L2181.78 486.28 L2181.80 486.00 L2181.78 485.72 L2181.71 485.43 L2181.57 485.14 L2181.39 484.82 L2181.15 484.47 L2180.88 484.10 L2180.59 483.70 L2180.31 483.28 L2180.04 482.83 L2179.82 482.37 L2179.65 481.90 L2179.55 481.43 L2179.53 480.99 L2179.60 480.57 L2179.75 480.20 L2180.00 479.88 L2180.32 479.61 L2180.72 479.40 L2181.17 479.26 L2181.66 479.17 L2182.18 479.14 L2182.70 479.14 L2183.21 479.18 L2183.70 479.22 L2184.15 479.27 L2184.57 479.30 L2184.94 479.31 L2185.26 479.27 L2185.55 479.19 L2185.80 479.07 L2186.03 478.91 L2186.24 478.71 L2186.44 478.44 L2186.62 478.12 L2186.80 477.75 L2186.98 477.33 L2187.18 476.88 L2187.41 476.42 L2187.67 475.97 L2187.96 475.54 L2188.28 475.16 L2188.63 474.84 L2189.00 474.60 L2189.40 474.45 L2189.80 474.40 L2190.20 474.45 L2190.60 474.60 L2190.97 474.84 L2191.32 475.16 L2191.64 475.54 L2191.93 475.97 L2192.19 476.42 L2192.42 476.88 L2192.62 477.33 L2192.80 477.75 L2192.98 478.12 L2193.16 478.44 L2193.36 478.71 L2193.57 478.91 L2193.80 479.07 L2194.05 479.19 L2194.34 479.27 L2194.66 479.31 L2195.03 479.30 L2195.45 479.27 L2195.90 479.22 L2196.39 479.18 L2196.90 479.14 L2197.42 479.14 L2197.94 479.17 L2198.43 479.26 L2198.88 479.40 L2199.28 479.61 L2199.60 479.88 L2199.85 480.20 L2200.00 480.57 L2200.07 480.99 L2200.05 481.43 L2199.95 481.90 L2199.78 482.37 L2199.56 482.83 L2199.29 483.28 L2199.01 483.70 L2198.72 484.10 L2198.45 484.47 L2198.21 484.82 L2198.03 485.14 L2197.89 485.43 L2197.82 485.72Z" fill="none" stroke="#8c6ff0" stroke-width="2.3" stroke-linejoin="round"/>
 <circle cx="2189.8" cy="486" r="3.3" fill="none" stroke="#8c6ff0" stroke-width="2.3"/>
</svg>
<div class="L" style="left:2221px;top:467px;color:#8c6ff0">管理环境</div>
<div class="a" style="left:1556px;top:305px;width:596px;height:62px;border-radius:12px;background:#fff;border:2px solid #e5e7ee;box-shadow:0 14px 90px rgba(0,0,0,0.12)"></div>
<svg class="a" style="left:2140px;top:320px" width="30" height="32" viewBox="2140 320 30 32"><path d="M2150 326 L2160 336 L2150 346Z" fill="#fff"/><path d="M2150.5 326.5 L2159.5 336 L2150.5 345.5" fill="none" stroke="#e5e7ee" stroke-width="1.5"/></svg>
<div class="L" style="left:1575px;top:317px">WEB 版不支持本地 Mock<span class="cm">,</span>可使用云端 Mock</div>
<div class="a" style="left:1522px;top:292px;width:948px;height:88px;border:8px solid #f04848;border-radius:14px"></div>

</div>
</body></html>
